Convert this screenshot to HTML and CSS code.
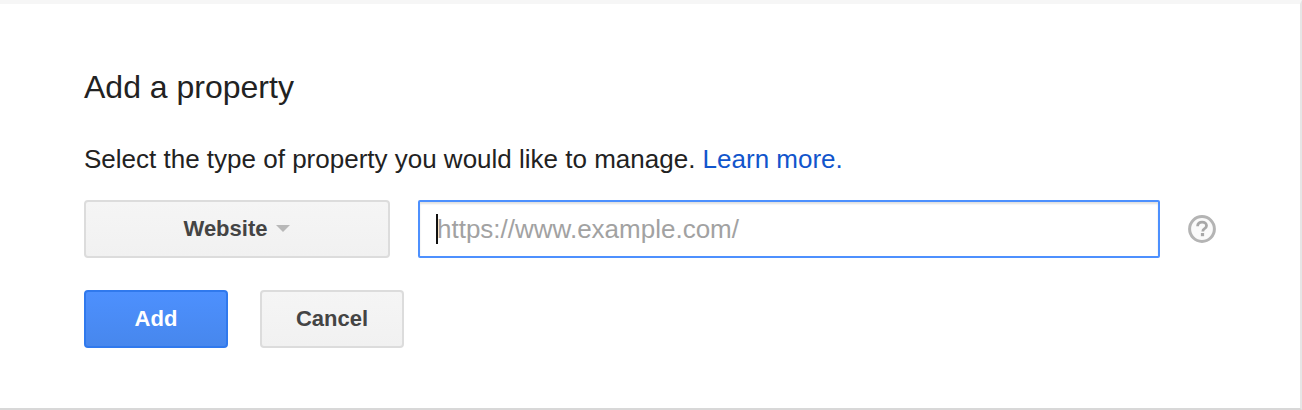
FILE: index.html
```html
<!DOCTYPE html>
<html lang="en">
  <head>
    <meta charset="UTF-8" />
    <title>Add a property</title>
    <link rel="stylesheet" href="styles.css">
  </head>
  <body>
    <div class="panel">
      <h1 class="title">Add a property</h1>
      <p class="intro">
        Select the type of property you would like to manage.
        <a href="#">Learn more.</a>
      </p>

      <!-- Property type and URL -->
      <div class="property-row">
        <div class="btn type-select">
          Website
          <span class="caret"></span>
        </div>
        <div class="url-input">
          <span class="cursor"></span>
          <span class="placeholder">https://www.example.com/</span>
        </div>
        <svg class="help" width="30" height="30" viewBox="0 0 30 30">
          <circle cx="15" cy="15" r="12.4" fill="#fafafa" stroke="#b4b4b4" stroke-width="3" />
          <path d="M10.6 12.2c0-2.6 2-4.1 4.5-4.1 2.6 0 4.4 1.5 4.4 3.6 0 1.7-1 2.5-2.2 3.2-1.1.7-1.5 1.2-1.5 2.5" fill="none" stroke="#a8a8a8" stroke-width="2.8" />
          <rect x="13.9" y="19" width="3.2" height="3.2" fill="#a8a8a8" />
        </svg>
      </div>

      <div class="actions">
        <div class="btn primary">Add</div>
        <div class="btn">Cancel</div>
      </div>
    </div>
  </body>
</html>
```

FILE: styles.css
```css
html,
body {
  margin: 0;
  padding: 0;
  height: 100%;
  overflow: hidden;
  background: #fff;
  font-family: "Liberation Sans", Arial, sans-serif;
  color: #222;
}

/* Page card with soft edges on top, right and bottom */
.panel {
  box-sizing: border-box;
  width: 1302px;
  height: 410px;
  padding: 67px 0 0 84px;
  border-top: 4px solid #f6f6f6;
  border-right: 2px solid #e6e6e6;
  border-bottom: 2px solid #d8d8d8;
}

.title {
  margin: 0;
  font-size: 32px;
  font-weight: normal;
  line-height: 32px;
}

.intro {
  margin: 40px 0 0;
  font-size: 26px;
  line-height: 32px;
}

.intro a {
  color: #1155cc;
  text-decoration: none;
}

.property-row {
  display: flex;
  align-items: center;
  margin-top: 25px;
}

.btn {
  box-sizing: border-box;
  display: flex;
  align-items: center;
  justify-content: center;
  width: 144px;
  height: 58px;
  background: linear-gradient(#f5f5f5, #f1f1f1);
  border: 2px solid #dcdcdc;
  border-radius: 4px;
  font-size: 22px;
  font-weight: bold;
  color: #444;
}

.type-select {
  width: 306px;
}

.caret {
  width: 0;
  height: 0;
  margin: -2px 0 0 9px;
  border-left: 7px solid transparent;
  border-right: 7px solid transparent;
  border-top: 7px solid #b8b8b8;
}

.url-input {
  box-sizing: border-box;
  display: flex;
  align-items: center;
  width: 742px;
  height: 58px;
  margin-left: 28px;
  padding-left: 16px;
  background: #fff;
  border: 2px solid #4d90fe;
  border-radius: 2px;
  box-shadow: inset 0 2px 2px rgba(0, 0, 0, 0.12);
  font-size: 26px;
}

.cursor {
  width: 2px;
  height: 30px;
  margin-right: -1px;
  background: #111;
}

.placeholder {
  color: #a2a2a2;
}

.help {
  margin-left: 27px;
}

.actions {
  display: flex;
  gap: 32px;
  margin-top: 32px;
}

.btn.primary {
  background: linear-gradient(#4d90fe, #4787ed);
  border-color: #3079ed;
  color: #fff;
}
```
